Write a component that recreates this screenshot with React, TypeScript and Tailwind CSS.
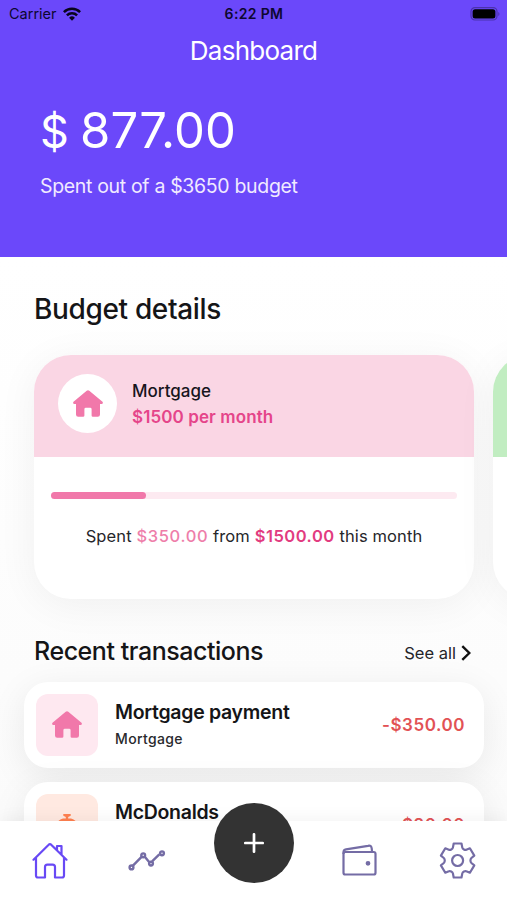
import type { ReactNode } from "react";

function SolidHome({ className }: { className?: string }) {
  return (
    <svg width="30" height="27" viewBox="0 0 30 27" fill="#f178aa" className={className}>
      <path d="M13.7.7a2 2 0 0 1 2.6 0l12.9 10.8c1.3 1.1.6 2.5-.9 2.500H27v10.500a2.200 2.200 0 0 1-2.200 2.200h-4.900a1.300 1.300 0 0 1-1.300-1.300v-6.200a1.400 1.400 0 0 0-1.400-1.400h-4.400a1.400 1.400 0 0 0-1.400 1.400v6.200a1.300 1.300 0 0 1-1.300 1.300H5.200A2.200 2.200 0 0 1 3 24.500V14H1.700C.2 14-.5 12.600.8 11.500Z" />
    </svg>
  );
}

function StatusBar() {
  return (
    <div className="grid h-7 grid-cols-3 items-center pl-[9px] pr-[7px] text-[#0d0730]">
      <div className="flex items-center gap-[6px]">
        <span className="text-[14.500px] leading-none">Carrier</span>
        <svg width="18" height="14" viewBox="0 0 18 14" fill="none" stroke="#08041c" strokeWidth="2.500">
          <path d="M.9 5.100a11.500 11.500 0 0 1 16.200 0" />
          <path d="M3.900 8.300a7.200 7.200 0 0 1 10.200 0" />
          <path d="M9 13.700 6.100 10.700a4.100 4.100 0 0 1 5.800 0Z" fill="#08041c" stroke="none" />
        </svg>
      </div>
      <span className="-ml-px text-center text-[14px] font-semibold leading-none tracking-[0.350px]">6:22 PM</span>
      <svg className="justify-self-end" width="30" height="14" viewBox="0 0 30 14">
        <rect x="1" y=".6" width="26" height="12.400" rx="4" fill="none" stroke="#4b32ad" strokeWidth="1.200" />
        <rect x="2.600" y="2.200" width="22.800" height="9.200" rx="2.500" fill="#000" />
        <path d="M28.300 5v4c1.500-.5 1.500-3.500 0-4Z" fill="#4b32ad" />
      </svg>
    </div>
  );
}

function BudgetCard() {
  return (
    <article className="h-[244px] w-[440px] shrink-0 overflow-hidden rounded-[37px] bg-white shadow-[0_6px_40px_rgba(0,0,0,0.055)]">
      <div className="flex h-[102px] items-center bg-[#fad6e4] pb-[5px] pl-6">
        <div className="flex size-[59px] items-center justify-center rounded-full bg-white">
          <SolidHome />
        </div>
        <div className="ml-[15px] flex flex-col whitespace-nowrap text-[17px] leading-[26px]">
          <span className="font-medium text-[#17151c]">Mortgage</span>
          <span className="font-semibold tracking-[0.100px] text-[#e5458a]">$1500 per month</span>
        </div>
      </div>
      <div className="px-[17px] pt-[35px]">
        <div className="h-[7px] rounded-full bg-[#fdeaf1]">
          <div className="h-full w-[95px] rounded-full bg-[#f178aa]" />
        </div>
        <p className="mt-[24px] whitespace-nowrap text-center text-[16.500px] leading-[26px] tracking-[0.120px] text-[#26262a]">
          Spent <span className="font-medium tracking-[0.650px] text-[#ee7eaa]">$350.00</span> from{" "}
          <span className="font-semibold tracking-[0.500px] text-[#e23b80]">$1500.00</span> this month
        </p>
      </div>
    </article>
  );
}

function Transaction({ icon, tint, title, category, amount }: { icon: ReactNode; tint: string; title: string; category: string; amount: string }) {
  return (
    <article className="flex h-[86px] shrink-0 items-center rounded-[24px] bg-white pl-3 pr-[19px] shadow-[0_8px_36px_rgba(0,0,0,0.08)]">
      <div className={`flex size-[62px] shrink-0 items-center justify-center rounded-[12px] ${tint}`}>{icon}</div>
      <div className="ml-[17px] flex flex-1 flex-col whitespace-nowrap pb-[2px]">
        <span className="text-[19.500px] font-semibold leading-[30px] tracking-[-0.300px] text-[#151517]">{title}</span>
        <span className="text-[14px] font-medium leading-6 tracking-[0.350px] text-[#29292c]">{category}</span>
      </div>
      <span className="pt-[2px] text-[17px] font-semibold tracking-[0.550px] text-[#e25255]">{amount}</span>
    </article>
  );
}

function BottomNav() {
  return (
    <nav className="relative z-10 flex h-[79px] shrink-0 bg-white shadow-[0_-2px_16px_rgba(0,0,0,0.05)]">
      <svg className="ml-8 mt-[21px]" width="36" height="37" viewBox="0 0 36 37" fill="none" stroke="#6849f5" strokeWidth="2.200" strokeLinecap="round" strokeLinejoin="round">
        <path d="M1.500 17.700 16.700 2.700a1.700 1.700 0 0 1 2.500 0L34.500 17.700M4 15.500v18c0 1.200.8 2 2 2h7V25c0-1.500.9-2.400 2.400-2.400h5.200c1.500 0 2.400.9 2.400 2.400v10.500h7c1.200 0 2-.8 2-2v-18M25 8V4h4.500v8.300" />
      </svg>
      <svg className="ml-[60px] mt-[28px]" width="38" height="23" viewBox="0 0 38 23" fill="none" stroke="#746ca5" strokeWidth="2.400">
        <path d="m4.700 16.900 9.100-9.300m3 .2 4.300 5.100m3-.5 7.200-7" />
        <circle cx="3.500" cy="18.400" r="1.900" />
        <circle cx="15.200" cy="6.300" r="1.900" />
        <circle cx="23" cy="14.600" r="1.900" />
        <circle cx="34" cy="4.300" r="1.900" />
      </svg>
      <button className="-mt-[18px] ml-12 flex size-20 items-center justify-center rounded-full bg-[#333]" aria-label="Add">
        <svg width="20" height="20" viewBox="0 0 20 20" stroke="#fff" strokeWidth="2.700" strokeLinecap="round"><path d="M10 1.300v17.400M1.300 10h17.400" /></svg>
      </button>
      <svg className="ml-12 mt-[23px]" width="36" height="32" viewBox="0 0 36 32" fill="none" stroke="#746ca5" strokeWidth="2.200" strokeLinejoin="round">
        <rect x="1.500" y="8" width="32" height="22.500" rx="1.800" />
        <path d="M1.500 10V8c0-1.700 1-2.400 2.500-2.700l22-3.500c2.700-.5 3.400.5 3.700 2.500l.4 3.700" />
        <circle cx="26" cy="19.300" r="1.300" fill="#746ca5" />
      </svg>
      <svg className="ml-[61px] mt-[20px]" width="38" height="39" viewBox="-1 -1 38 39" fill="none" stroke="#746ca5" strokeWidth="2.200" strokeLinejoin="round">
        <path d="M13.700 1.500h7.800l.8 4.100c.3 1.500 2.700 2.700 4 2.100l3.600-1.400 4.400 7.300-2.900 2.400c-1.300 1.200-1.300 3.800 0 5l2.900 2.400-4.400 7.300-3.600-1.400c-1.300-.6-3.700.6-4 2.100l-.8 4.100h-7.800l-.8-4.100c-.3-1.500-2.700-2.700-4-2.100l-3.600 1.400-4.400-7.300L3.800 21c1.300-1.200 1.300-3.800 0-5L.9 13.600l4.400-7.300 3.600 1.400c1.300.6 3.700-.6 4-2.100Z" />
        <circle cx="17.600" cy="18.500" r="5.500" />
      </svg>
    </nav>
  );
}

export default function App() {
  return (
    <div className="flex h-[900px] w-[507px] flex-col overflow-hidden bg-white font-['Inter','Liberation_Sans',sans-serif]">
      <header className="h-[257px] shrink-0 bg-[#6b48fa] text-white">
        <StatusBar />
        <h1 className="mt-[6px] text-center text-[26px] leading-[34px] tracking-[-0.750px]">Dashboard</h1>
        <div className="mt-[31px] pl-10">
          <p className="flex h-16 items-baseline text-[49px] leading-[64px]">
            <span className="w-[40px] text-[45px] leading-[64px]">$</span>
            <span className="tracking-[0.100px]">877.00</span>
          </p>
          <p className="mt-[9px] text-[19.500px] leading-7 tracking-[-0.330px] text-[#f0eaff]">Spent out of a $3650 budget</p>
        </div>
      </header>
      <main className="min-h-0 flex-1 overflow-hidden bg-gradient-to-b from-white to-[#fbfbfb]">
        <h2 className="ml-[34px] mt-[33px] text-[28px] font-medium leading-[38px] tracking-[-0.350px] text-[#151517]">Budget details</h2>
        <div className="ml-[34px] mt-[27px] flex gap-[19.400px]">
          <BudgetCard />
          <article className="h-[244px] w-[440px] shrink-0 overflow-hidden rounded-[37px] bg-white shadow-[0_6px_40px_rgba(0,0,0,0.055)]">
            <div className="h-[102px] bg-[#c1edc1]" />
          </article>
        </div>
        <div className="mt-[33px] flex items-center justify-between pl-[34px] pr-9">
          <h2 className="text-[25px] font-medium leading-[38px] tracking-[-0.450px] text-[#151517]">Recent transactions</h2>
          <div className="flex items-center gap-[5px] pt-1 text-[16.500px] text-[#252529]">
            See all
            <svg width="10" height="16" viewBox="0 0 10 16" fill="none" stroke="#111" strokeWidth="2.400"><path d="m1.300 1.200 7 6.800-7 6.800" /></svg>
          </div>
        </div>
        <div className="ml-6 mr-[23px] mt-[12px] flex flex-col gap-[14px]">
          <Transaction icon={<SolidHome className="-mt-px" />} tint="bg-[#fee8f0]" title="Mortgage payment" category="Mortgage" amount="-$350.00" />
          <Transaction
            icon={
              <svg width="30" height="22" viewBox="0 0 30 22" fill="#ff8050">
                <path d="M11.300 0h7.400v1.800l-2.500 1.200v1.500H19c4.300 1.100 7.300 4.600 7.500 8.500h-23c.2-3.900 3.200-7.400 7.500-8.500h2.800V3l-2.500-1.200ZM2 15h26v4H2Z" />
              </svg>
            }
            tint="bg-[#ffe9e1]"
            title="McDonalds"
            category="Food"
            amount="-$20.00"
          />
        </div>
      </main>
      <BottomNav />
    </div>
  );
}
